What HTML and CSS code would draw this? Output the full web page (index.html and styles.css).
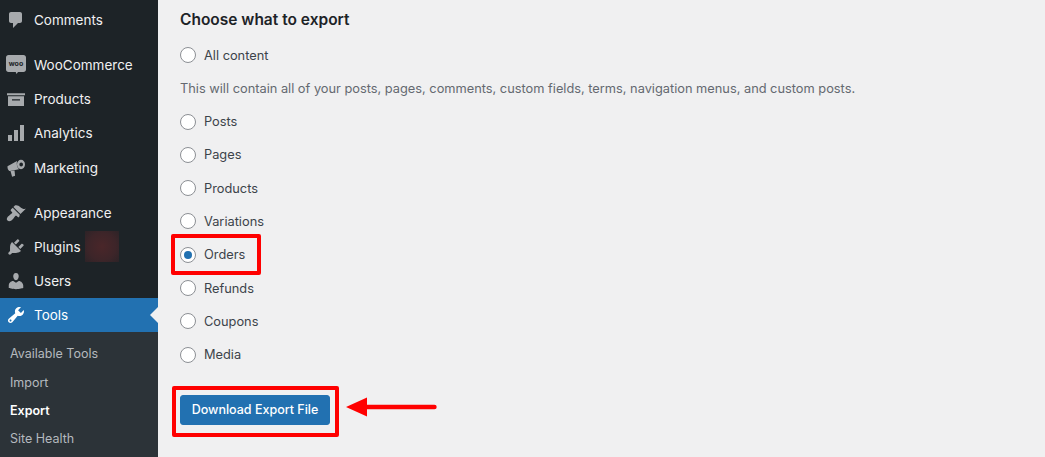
FILE: index.html
```html
<!DOCTYPE html>
<html lang="en">
<head>
  <meta charset="UTF-8" />
  <title>Export</title>
  <link rel="stylesheet" href="styles.css">
</head>
<body>
  <aside class="sidebar">
    <a class="menu-item first">
      <svg class="icon" viewBox="0 0 20 20"><path d="M5 2h9c1.100 0 2 .9 2 2v7c0 1.100-.9 2-2 2h-2l-5 5v-5H5c-1.100 0-2-.9-2-2V4c0-1.100.9-2 2-2z"/></svg>
      Comments
    </a>
    <div class="separator"></div>
    <a class="menu-item woo">
      <svg class="icon" viewBox="0 0 20 20"><path d="M2.500 0h15C18.900 0 20 1.100 20 2.500v12c0 1.400-1.100 2.500-2.500 2.500h-5.500l-1.500 2-.8-2H2.500C1.100 17 0 15.900 0 14.500v-12C0 1.100 1.100 0 2.500 0z"/><text class="woo-text" x="10" y="11">woo</text></svg>
      WooCommerce
    </a>
    <a class="menu-item">
      <svg class="icon" viewBox="0 0 20 20"><path fill-rule="evenodd" d="M1 4.300h18v2H1zM2 7.300h16V17H2zM6 10.300v1.200h8v-1.200z"/></svg>
      Products
    </a>
    <a class="menu-item">
      <svg class="icon" viewBox="0 0 20 20"><path d="M18 18V2h-4v16h4zm-6 0V7H8v11h4zm-6 0v-6H2v6h4z"/></svg>
      Analytics
    </a>
    <a class="menu-item marketing">
      <svg class="icon" viewBox="0 0 20 20"><path d="M1.500 8.200 11 3c-.6 3-.1 6.200 2 8.200L4 13C2.500 13.200 1.300 10.500 1.500 8.200z"/><path d="M4.500 13l4-.6.6 5.300-3 1z"/><path fill-rule="evenodd" d="M15 1.800c2.300 0 4 2.100 4 4.700s-1.700 4.700-4 4.700-4-2.100-4-4.700 1.700-4.700 4-4.700zm.2 2.700c-1 0-1.800.9-1.800 2s.8 2 1.800 2 1.800-.9 1.800-2-.8-2-1.800-2z"/></svg>
      Marketing
    </a>
    <div class="separator"></div>
    <a class="menu-item">
      <svg class="icon" viewBox="0 0 20 20"><path d="M14.480 11.060L7.410 3.990l1.500-1.500c.5-.56 2.300-.47 3.510.32 1.210.8 1.430 1.280 2.910 2.100 1.180.64 2.450 1.260 4.450.85zm-.71.71L6.700 4.700 4.930 6.470c-.39.39-.39 1.020 0 1.410l1.060 1.060c.39.39.39 1.030 0 1.420-.6.6-1.430 1.110-2.210 1.690-.35.26-.7.53-1.010.84C1.430 13.710 0 16.010 1.540 17.550c1.600 1.600 3.800.1 5.240-1.330.31-.31.58-.66.84-1.010.58-.78 1.090-1.610 1.690-2.210.39-.39 1.020-.39 1.410 0l1.060 1.060c.39.39 1.020.39 1.410 0z"/></svg>
      Appearance
    </a>
    <a class="menu-item">
      <svg class="icon" viewBox="0 0 20 20"><path d="M13.110 4.360L9.870 7.600 8 5.730l3.240-3.240c.35-.34 1.050-.2 1.560.32.52.51.66 1.210.31 1.550zm-8 1.770l.91-1.120 9.010 9.010-1.190.84c-.71.71-2.630 1.160-3.820 1.160H6.140L4.900 17.260c-.59.59-1.540.59-2.120 0-.59-.58-.59-1.530 0-2.120l1.240-1.240v-3.880c0-1.130.4-3.190 1.090-3.890zm7.260 3.970l3.240-3.240c.34-.35 1.040-.21 1.550.31.52.51.66 1.210.31 1.550l-3.240 3.250z"/></svg>
      Plugins
      <span class="blur-patch"></span>
    </a>
    <a class="menu-item">
      <svg class="icon" viewBox="0 0 20 20"><path d="M10 9.250c-2.270 0-2.730-3.440-2.730-3.440C7 4.020 7.820 2 9.970 2c2.160 0 2.980 2.020 2.710 3.810 0 0-.41 3.440-2.680 3.440zm0 2.570L12.720 10c2.390 0 4.520 2.330 4.520 4.530v2.490s-3.650 1.130-7.240 1.130c-3.650 0-7.240-1.130-7.240-1.130v-2.490c0-2.250 1.940-4.480 4.470-4.480z"/></svg>
      Users
    </a>
    <a class="menu-item active">
      <svg class="icon" viewBox="0 0 20 20"><path d="M16.680 9.770c-1.340 1.340-3.300 1.670-4.950.99l-5.410 6.520c-.99.99-2.590.99-3.580 0s-.99-2.590 0-3.570l6.520-5.420c-.68-1.650-.35-3.610.99-4.950 1.280-1.280 3.120-1.620 4.720-1.060l-2.890 2.890 2.820 2.820 2.860-2.870c.53 1.580.18 3.390-1.080 4.650zM3.810 16.210c.4.39 1.040.39 1.430 0 .4-.4.4-1.040 0-1.430-.39-.4-1.030-.4-1.430 0-.39.39-.39 1.030 0 1.430z"/></svg>
      Tools
    </a>
    <ul class="submenu">
      <li>Available Tools</li>
      <li>Import</li>
      <li class="current">Export</li>
      <li>Site Health</li>
    </ul>
  </aside>

  <main class="content">
    <h2>Choose what to export</h2>
    <label class="option"><input type="radio" name="content" /> All content</label>
    <p class="desc">This will contain all of your posts, pages, comments, custom fields, terms, navigation menus, and custom posts.</p>
    <label class="option"><input type="radio" name="content" /> Posts</label>
    <label class="option"><input type="radio" name="content" /> Pages</label>
    <label class="option"><input type="radio" name="content" /> Products</label>
    <label class="option"><input type="radio" name="content" /> Variations</label>
    <label class="option highlighted"><input type="radio" name="content" checked /> Orders</label>
    <label class="option"><input type="radio" name="content" /> Refunds</label>
    <label class="option"><input type="radio" name="content" /> Coupons</label>
    <label class="option"><input type="radio" name="content" /> Media</label>
    <div class="submit-row">
      <button class="btn-primary">Download Export File</button>
      <svg class="arrow" width="92" height="22" viewBox="0 0 92 22"><path d="M0 11 21 1.500V8.800H88.500a2.200 2.200 0 0 1 0 4.400H21V20.500z"/></svg>
    </div>
  </main>
</body>
</html>
```
FILE: styles.css
```css
body {
  margin: 0;
  height: 457px;
  display: flex;
  overflow: hidden;
  background: #f0f0f1;
  font-family: Inter, "Liberation Sans", sans-serif;
  font-size: 13px;
  color: #3c434a;
}

/* Sidebar */
.sidebar {
  width: 158px;
  flex-shrink: 0;
  background: #1d2327;
  color: #f0f0f1;
}

.menu-item {
  position: relative;
  display: flex;
  align-items: center;
  gap: 8px;
  height: 34px;
  padding-left: 6px;
  font-size: 13.500px;
}

.menu-item.first {
  margin-top: 3px;
}

.menu-item.marketing {
  margin-top: 1px;
}

.separator {
  height: 11px;
}

.icon {
  width: 20px;
  height: 20px;
  fill: #a7aaad;
  flex-shrink: 0;
}

.woo-text {
  font-size: 7px;
  font-weight: 700;
  text-anchor: middle;
  fill: #1d2327;
}

.blur-patch {
  position: absolute;
  left: 85px;
  top: 1px;
  width: 34px;
  height: 31px;
  background: radial-gradient(circle, #4a2629 0%, #3d2529 60%, #2c2327 100%);
}

.menu-item.active {
  background: #2271b1;
  color: #fff;
}

.menu-item.active .icon {
  fill: #fff;
}

.menu-item.active::after {
  content: "";
  position: absolute;
  right: 0;
  top: 9px;
  border: 8px solid transparent;
  border-right-color: #f0f0f1;
}

.submenu {
  margin: 0;
  padding: 7.600px 0 0;
  list-style: none;
  height: 118px;
  background: #2c3338;
  color: #b4b9be;
  font-size: 12.500px;
}

.submenu li {
  display: flex;
  align-items: center;
  height: 28.400px;
  padding-left: 10px;
}

.submenu .current {
  color: #fff;
  font-weight: 600;
}

/* Main area */
.content {
  flex: 1;
  padding: 0 22px;
}

.content h2 {
  margin: 0;
  height: 38.600px;
  line-height: 39px;
  font-size: 15.500px;
  font-weight: 600;
  color: #1d2327;
}

.option {
  position: relative;
  display: flex;
  align-items: center;
  gap: 8px;
  height: 33.300px;
  font-size: 12.800px;
}

.desc {
  margin: 0;
  height: 33px;
  line-height: 33px;
  font-size: 12.800px;
  color: #646970;
}

.option input {
  appearance: none;
  width: 16px;
  height: 16px;
  margin: 0;
  border: 1px solid #8c8f94;
  border-radius: 50%;
  background: #fff;
  display: grid;
  place-items: center;
}

.option input:checked::before {
  content: "";
  width: 8px;
  height: 8px;
  border-radius: 50%;
  background: #2271b1;
}

/* red annotation boxes */
.highlighted::after {
  content: "";
  position: absolute;
  left: -9px;
  top: -4px;
  width: 82px;
  height: 33px;
  border: 4px solid #f00;
  border-radius: 2px;
}

.submit-row {
  position: relative;
  margin-top: 23.600px;
}

.btn-primary {
  display: block;
  width: 150px;
  height: 30px;
  padding: 0;
  border: 1px solid #2271b1;
  border-radius: 3px;
  background: #2271b1;
  color: #fff;
  font: 500 12.500px Inter, "Liberation Sans", sans-serif;
}

.submit-row::after {
  content: "";
  position: absolute;
  left: -8px;
  top: -9px;
  width: 159px;
  height: 43px;
  border: 4px solid #f00;
  border-radius: 2px;
}

.arrow {
  position: absolute;
  left: 166px;
  top: 1.500px;
  fill: #f00;
}
```
